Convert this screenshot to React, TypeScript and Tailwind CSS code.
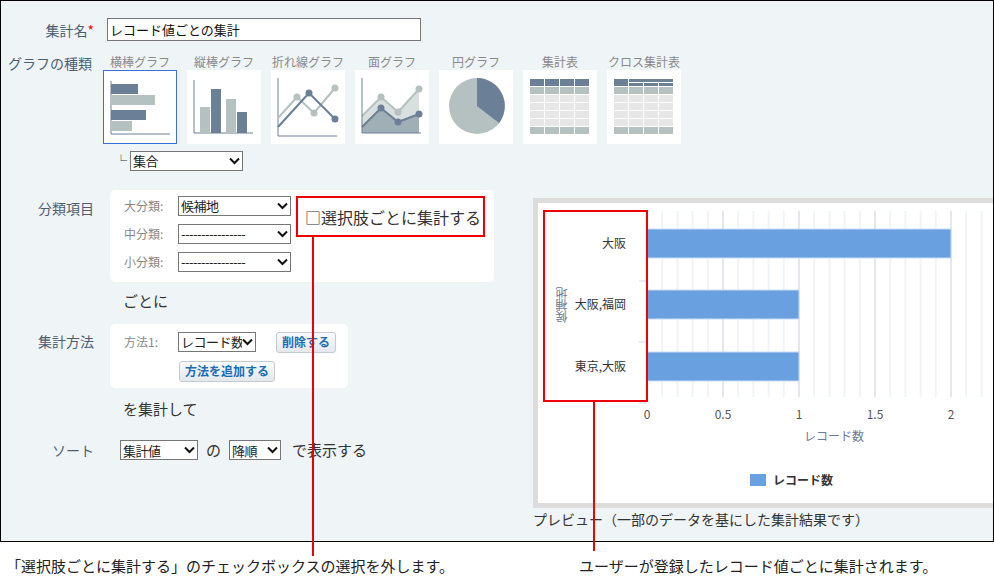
import React from "react";

const DARK = "#6b8096";
const LIGHT = "#b5c1c0";

function Tile({ label, selected, children }: { label: string; selected?: boolean; children: React.ReactNode }) {
  return (
    <div className="flex flex-col items-center w-[74px]">
      <div className="text-[12px] leading-[17px] text-[#8a8a8a] whitespace-nowrap">{label}</div>
      <div className={"w-[74px] h-[74px] bg-white " + (selected ? "border border-[#3b6fd8]" : "")}>
        <svg width="74" height="74" viewBox="0 0 74 74">{children}</svg>
      </div>
    </div>
  );
}

function TableIcon({ cross }: { cross?: boolean }) {
  const rows = [] as React.ReactNode[];
  for (let r = 0; r < 7; r++) {
    for (let c = 0; c < 4; c++) {
      const fill = r === 0 ? DARK : r === 1 || r === 6 ? LIGHT : "#e6e6e6";
      if (cross && r === 0) continue;
      rows.push(<rect key={r + "-" + c} x={7 + c * 15} y={9 + r * 8} width={14} height={7} fill={fill} />);
    }
  }
  if (cross) {
    rows.push(<rect key="a" x={7} y={9} width={14} height={7} fill={DARK} />);
    rows.push(<rect key="b" x={22} y={9} width={44} height={3} fill={DARK} />);
    for (let c = 1; c < 4; c++) rows.push(<rect key={"s" + c} x={7 + c * 15} y={13} width={14} height={3} fill={DARK} />);
  }
  return <>{rows}</>;
}

function Sel({ w, children }: { w: number; children: React.ReactNode }) {
  return (
    <div className="h-[20px] border border-[#767676] bg-white flex items-center pl-[2px] pr-[2px] text-[13px] text-[#222]" style={{ width: w }}>
      <span className="flex-1 whitespace-nowrap overflow-hidden tracking-[-0.5px]">{children}</span>
      <svg width="11" height="8" viewBox="0 0 11 8" className="shrink-0"><path d="M1 1.5 L5.5 6 L10 1.5" stroke="#111" strokeWidth="2" fill="none" /></svg>
    </div>
  );
}

function Btn({ children }: { children: React.ReactNode }) {
  return (
    <div className="h-[21px] px-[5px] flex items-center rounded-[3px] border border-[#c4cbd0] bg-gradient-to-b from-[#fafbfc] to-[#e4e8eb] text-[12px] font-bold text-[#1b6cb5] whitespace-nowrap">{children}</div>
  );
}

export default function App() {
  const labelCls = "w-[95px] text-right text-[14px] text-[#4d5e73] leading-[20px] pr-[2px]";
  const grid = [] as React.ReactNode[];
  for (let i = 0; i <= 22; i++) {
    const x = 647 - 538 + i * 15.2;
    grid.push(<line key={i} x1={x} y1={0} x2={x} y2={186} stroke={i % 5 === 0 ? "#e3e8ef" : "#f0f3f7"} strokeWidth="2" />);
  }
  return (
    <div className="relative w-[994px] h-[584px] bg-white overflow-hidden" style={{ fontFamily: '"Noto Sans CJK JP", "Noto Sans", sans-serif' }}>
      <div className="h-[542px] border border-black bg-[#eff4f7] flex">
        <div className="w-[532px] flex flex-col">
          <div className="flex items-center mt-[17px]">
            <div className={labelCls}>集計名<span className="text-[#e00]">*</span></div>
            <div className="ml-[11px] w-[314px] h-[23px] border border-[#767676] bg-white text-[13px] flex items-center pl-[2px] text-[#111]">レコード値ごとの集計</div>
          </div>
          <div className="flex mt-[12px]">
            <div className="w-[95px] text-[14px] text-[#4d5e73] leading-[20px] pl-[7px] whitespace-nowrap">グラフの種類</div>
            <div className="ml-[11px] flex gap-[10px]">
              <Tile label="横棒グラフ" selected>
                <line x1="7" y1="10" x2="7" y2="63" stroke={DARK} /><line x1="7" y1="63" x2="66" y2="63" stroke={DARK} />
                <rect x="7" y="13" width="27" height="10" fill={DARK} /><rect x="7" y="24" width="44" height="10" fill={LIGHT} />
                <rect x="7" y="39" width="35" height="10" fill={DARK} /><rect x="7" y="50" width="21" height="10" fill={LIGHT} />
              </Tile>
              <Tile label="縦棒グラフ">
                <line x1="7" y1="10" x2="7" y2="63" stroke={DARK} /><line x1="7" y1="63" x2="66" y2="63" stroke={DARK} />
                <rect x="13" y="37" width="10" height="26" fill={LIGHT} /><rect x="24" y="19" width="10" height="44" fill={DARK} />
                <rect x="39" y="29" width="10" height="34" fill={LIGHT} /><rect x="50" y="42" width="10" height="21" fill={DARK} />
              </Tile>
              <Tile label="折れ線グラフ">
                <line x1="7" y1="8" x2="7" y2="66" stroke={DARK} /><line x1="7" y1="66" x2="66" y2="66" stroke={DARK} />
                <polyline points="7,48 26,27 43,43 64,18" stroke={LIGHT} strokeWidth="2" fill="none" />
                <polyline points="7,57 38,23 64,49" stroke={DARK} strokeWidth="2" fill="none" />
                <circle cx="26" cy="27" r="3.5" fill={LIGHT} /><circle cx="43" cy="43" r="3.5" fill={LIGHT} /><circle cx="64" cy="18" r="3.5" fill={LIGHT} />
                <circle cx="38" cy="23" r="3.5" fill={DARK} /><circle cx="64" cy="49" r="3.5" fill={DARK} />
              </Tile>
              <Tile label="面グラフ">
                <polygon points="7,46 26,27 43,42 64,19 64,63 7,63" fill="#d8dfdf" />
                <polyline points="7,46 26,27 43,42 64,19" stroke={LIGHT} strokeWidth="2" fill="none" />
                <polygon points="7,57 26,38 43,52 64,44 64,63 7,63" fill="#a0aeb6" />
                <polyline points="7,57 26,38 43,52 64,44" stroke={DARK} strokeWidth="2" fill="none" />
                <line x1="7" y1="8" x2="7" y2="63" stroke={DARK} /><line x1="7" y1="63" x2="66" y2="63" stroke={DARK} />
                <circle cx="26" cy="27" r="3.5" fill={LIGHT} /><circle cx="43" cy="42" r="3.5" fill={LIGHT} /><circle cx="64" cy="19" r="3.5" fill={LIGHT} />
                <circle cx="26" cy="38" r="3.5" fill={DARK} /><circle cx="43" cy="52" r="3.5" fill={DARK} /><circle cx="64" cy="44" r="3.5" fill={DARK} />
              </Tile>
              <Tile label="円グラフ">
                <circle cx="38" cy="36" r="28" fill={LIGHT} />
                <path d="M38 36 L38 8 A28 28 0 0 1 60 53 Z" fill={DARK} />
              </Tile>
              <Tile label="集計表"><TableIcon /></Tile>
              <Tile label="クロス集計表"><TableIcon cross /></Tile>
            </div>
          </div>
          <div className="flex items-center mt-[7px] ml-[114px]">
            <span className="text-[12px] text-[#333] mr-[3px]">└</span>
            <Sel w={113}>集合</Sel>
          </div>
          <div className="flex mt-[27px]">
            <div className={labelCls}>分類項目</div>
            <div className="ml-[14px] w-[384px] h-[92px] bg-white rounded-[5px] pl-[14px] pt-[6px] flex flex-col gap-[8px] -mt-[8px]">
              {["大分類:", "中分類:", "小分類:"].map((l, i) => (
                <div key={l} className="flex items-center">
                  <span className="w-[54px] text-[12px] text-[#888]">{l}</span>
                  <Sel w={113}>{i === 0 ? "候補地" : "----------------"}</Sel>
                </div>
              ))}
            </div>
          </div>
          <div className="ml-[122px] mt-[8px] text-[15px] text-[#333]">ごとに</div>
          <div className="flex mt-[18px]">
            <div className={labelCls}>集計方法</div>
            <div className="ml-[14px] w-[238px] h-[64px] bg-white rounded-[5px] pl-[14px] pt-[8px] -mt-[7px]">
              <div className="flex items-center">
                <span className="w-[54px] text-[12px] text-[#888]">方法1:</span>
                <Sel w={78}>レコード数</Sel>
                <div className="ml-[20px]"><Btn>削除する</Btn></div>
              </div>
              <div className="ml-[55px] mt-[8px] inline-block"><Btn>方法を追加する</Btn></div>
            </div>
          </div>
          <div className="ml-[122px] mt-[10px] text-[15px] text-[#333]">を集計して</div>
          <div className="flex items-center mt-[19px]">
            <div className={labelCls}>ソート</div>
            <div className="ml-[24px]"><Sel w={78}>集計値</Sel></div>
            <span className="mx-[8px] text-[15px] text-[#333]">の</span>
            <Sel w={52}>降順</Sel>
            <span className="ml-[11px] text-[15px] text-[#333]">で表示する</span>
          </div>
        </div>
        <div className="flex-1 flex flex-col pt-[197px]">
          <div className="h-[310px] border-[5px] border-r-0 border-[#dcdcdc] bg-white relative">
            <svg className="absolute left-0 top-0" width="460" height="300">
              <g transform="translate(0,8)">{grid}</g>
              <line x1="101" y1="200" x2="109" y2="200" stroke="#ccd6eb" />
              <line x1="101" y1="139" x2="109" y2="139" stroke="#ccd6eb" />
              <line x1="101" y1="78" x2="109" y2="78" stroke="#ccd6eb" />
              <rect x="109" y="26" width="304" height="29" fill="#68a0e0" stroke="#c9dcf4" />
              <rect x="109" y="87" width="152" height="29" fill="#68a0e0" stroke="#c9dcf4" />
              <rect x="109" y="149" width="152" height="29" fill="#68a0e0" stroke="#c9dcf4" />
            </svg>
            <div className="absolute right-[367px] top-[31px] text-[12px] text-[#333]">大阪</div>
            <div className="absolute right-[367px] top-[92px] text-[12px] text-[#333]">大阪,福岡</div>
            <div className="absolute right-[367px] top-[154px] text-[12px] text-[#333]">東京,大阪</div>
            <div className="absolute left-[17px] top-[84px] text-[12px] leading-[14px] text-[#6b7a99] [writing-mode:vertical-rl] rotate-180 whitespace-nowrap">候補地</div>
            {[["0", 109], ["0.5", 185], ["1", 261], ["1.5", 337], ["2", 413]].map(([t, x]) => (
              <div key={t} className="absolute top-[202px] text-[12px] text-[#555] -translate-x-1/2" style={{ left: x as number }}>{t}</div>
            ))}
            <div className="absolute left-[266px] top-[224px] text-[12px] text-[#6b7a99]">レコード数</div>
            <div className="absolute left-[212px] top-[268px] flex items-center gap-[7px]">
              <div className="w-[16px] h-[12px] bg-[#68a0e0]" />
              <span className="text-[12px] font-bold text-[#333]">レコード数</span>
            </div>
          </div>
          <div className="mt-[1px] text-[14px] text-[#333] whitespace-nowrap">プレビュー（一部のデータを基にした集計結果です）</div>
        </div>
      </div>
      <div className="flex mt-[13px] text-[15px] text-[#222] whitespace-nowrap">
        <span className="ml-[6px] w-[573px]">「選択肢ごとに集計する」のチェックボックスの選択を外します。</span>
        <span>ユーザーが登録したレコード値ごとに集計されます。</span>
      </div>

      <div className="absolute left-[296px] top-[196px] w-[189px] h-[41px] border-2 border-[#e00] flex items-center pl-[7px]">
        <span className="text-[16px] text-[#333] whitespace-nowrap">□選択肢ごとに集計する</span>
      </div>
      <div className="absolute left-[312px] top-[237px] w-[2px] h-[319px] bg-[#e00]" />
      <div className="absolute left-[543px] top-[210px] w-[105px] h-[192px] border-2 border-[#e00]" />
      <div className="absolute left-[593px] top-[401px] w-[2px] h-[150px] bg-[#e00]" />
    </div>
  );
}
